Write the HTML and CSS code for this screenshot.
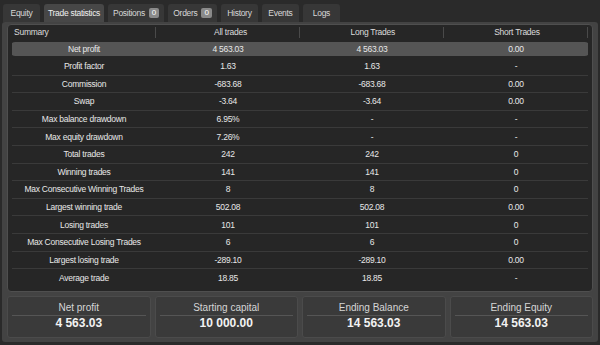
FILE: index.html
```html
<!DOCTYPE html>
<html>
<head>
<meta charset="utf-8">
<link rel="stylesheet" href="styles.css">
</head>
<body>
<div class="tabs">
  <div class="tab">Equity</div>
  <div class="tab active">Trade statistics</div>
  <div class="tab">Positions <span class="badge">0</span></div>
  <div class="tab">Orders <span class="badge">0</span></div>
  <div class="tab">History</div>
  <div class="tab">Events</div>
  <div class="tab">Logs</div>
</div>
<div class="panel">
  <div class="tablebox">
    <div class="row head">
      <div class="c h1">Summary</div>
      <div class="c h2">All trades</div>
      <div class="c h3">Long Trades</div>
      <div class="c h4">Short Trades</div>
    </div>
    <div class="row hl"><div class="c">Net profit</div><div class="c">4 563.03</div><div class="c">4 563.03</div><div class="c">0.00</div></div>
    <div class="row"><div class="c">Profit factor</div><div class="c">1.63</div><div class="c">1.63</div><div class="c">-</div></div>
    <div class="row"><div class="c">Commission</div><div class="c">-683.68</div><div class="c">-683.68</div><div class="c">0.00</div></div>
    <div class="row"><div class="c">Swap</div><div class="c">-3.64</div><div class="c">-3.64</div><div class="c">0.00</div></div>
    <div class="row"><div class="c">Max balance drawdown</div><div class="c">6.95%</div><div class="c">-</div><div class="c">-</div></div>
    <div class="row"><div class="c">Max equity drawdown</div><div class="c">7.26%</div><div class="c">-</div><div class="c">-</div></div>
    <div class="row"><div class="c">Total trades</div><div class="c">242</div><div class="c">242</div><div class="c">0</div></div>
    <div class="row"><div class="c">Winning trades</div><div class="c">141</div><div class="c">141</div><div class="c">0</div></div>
    <div class="row"><div class="c">Max Consecutive Winning Trades</div><div class="c">8</div><div class="c">8</div><div class="c">0</div></div>
    <div class="row"><div class="c">Largest winning trade</div><div class="c">502.08</div><div class="c">502.08</div><div class="c">0.00</div></div>
    <div class="row"><div class="c">Losing trades</div><div class="c">101</div><div class="c">101</div><div class="c">0</div></div>
    <div class="row"><div class="c">Max Consecutive Losing Trades</div><div class="c">6</div><div class="c">6</div><div class="c">0</div></div>
    <div class="row"><div class="c">Largest losing trade</div><div class="c">-289.10</div><div class="c">-289.10</div><div class="c">0.00</div></div>
    <div class="row last"><div class="c">Average trade</div><div class="c">18.85</div><div class="c">18.85</div><div class="c">-</div></div>
  </div>
  <div class="cards">
    <div class="card"><div class="ct">Net profit</div><div class="cv">4 563.03</div></div>
    <div class="card"><div class="ct">Starting capital</div><div class="cv">10 000.00</div></div>
    <div class="card"><div class="ct">Ending Balance</div><div class="cv">14 563.03</div></div>
    <div class="card"><div class="ct">Ending Equity</div><div class="cv">14 563.03</div></div>
  </div>
</div>
</body>
</html>
```
FILE: styles.css
```css
* { box-sizing: border-box; }
html, body { margin: 0; padding: 0; }
body {
  background: #2a2a2a;
  font-family: "Liberation Sans", Arial, sans-serif;
  color: #e2e2e2;
  width: 600px;
  height: 345px;
  overflow: hidden;
}
.tabs {
  display: flex;
  gap: 4px;
  padding: 4px 0 0 3px;
  height: 22px;
}
.tab {
  background: #373737;
  border-radius: 3px 3px 0 0;
  font-size: 8.5px;
  letter-spacing: -0.3px;
  line-height: 18px;
  padding: 0 5px;
  min-width: 37px;
  display: flex;
  align-items: center;
  justify-content: center;
  gap: 4px;
  color: #d8d8d8;
}
.tab.active { background: #474747; color: #f0f0f0; padding: 0 4px; }
.badge {
  background: #8a8a8a;
  color: #fff;
  font-size: 8px;
  letter-spacing: 0;
  line-height: 10px;
  padding: 0 3px;
  border-radius: 2px;
}
.panel {
  margin: 0 2px;
  background: #434343;
  border-radius: 3px;
  padding: 2px 5px 4px 5px;
  height: 320px;
  display: flex;
  flex-direction: column;
  gap: 4px;
}
.tablebox {
  background: #262626;
  border: 1px solid #4f4f4f;
  border-radius: 4px;
  padding: 0 4px;
  height: 270px;
}
.row {
  display: grid;
  grid-template-columns: repeat(4, 1fr);
  height: 17.6px;
  align-items: center;
  font-size: 8.5px;
  letter-spacing: -0.25px;
  border-bottom: 1px solid #3a3a3a;
  color: #e8e8e8;
}
.row .c { text-align: center; white-space: nowrap; }
.row.head { height: 15px; border-bottom: none; color: #dcdcdc; }
.row.head .c { border-right: 1px solid #4a4a4a; line-height: 11px; }
.row.head .h1 { text-align: left; padding-left: 2px; }
.row.head .h2 { text-align: left; padding-left: 58px; }
.row.head .h3 { text-align: right; padding-right: 48px; }
.row.head .h4 { text-align: center; padding-left: 3px; }
.row.hl {
  background: #555555;
  border-radius: 3px;
  border-bottom: 2px solid #262626;
  border-top: 2px solid #262626;
  height: 18px;
  background-clip: padding-box;
}
.row.last { border-bottom: none; }
.cards {
  display: flex;
  gap: 4px;
  height: 42px;
}
.card {
  flex: 1;
  background: #3a3a3a;
  border: 1px solid #4b4b4b;
  border-radius: 3px;
  padding: 0 4px;
  text-align: center;
}
.ct {
  font-size: 10px;
  line-height: 15px;
  color: #d6d6d6;
  border-bottom: 1px solid #555;
  padding-top: 3px;
}
.cv {
  font-size: 12px;
  font-weight: bold;
  color: #f2f2f2;
  line-height: 14px;
}
```
